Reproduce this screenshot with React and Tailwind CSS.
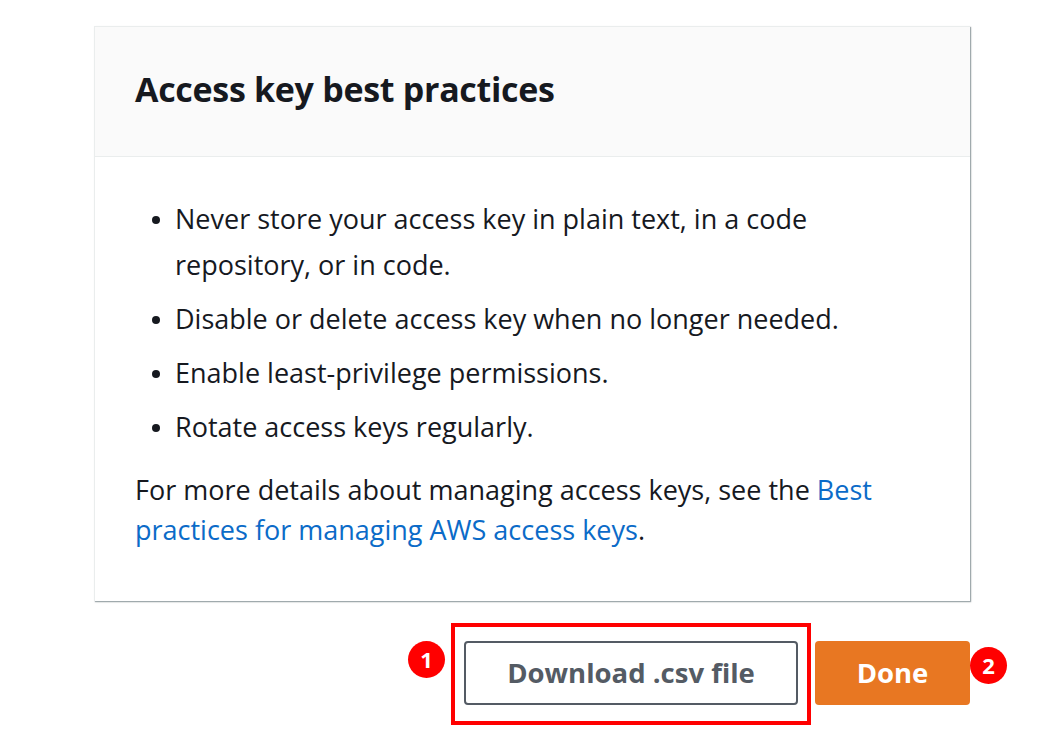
export default function App() {
  const tips = [
    "Never store your access key in plain text, in a code repository, or in code.",
    "Disable or delete access key when no longer needed.",
    "Enable least-privilege permissions.",
    "Rotate access keys regularly.",
  ];

  return (
    <div
      className="w-[1048px] h-[743px] bg-white text-[#16191f]"
      style={{ fontFamily: '"Open Sans", "Noto Sans", sans-serif' }}
    >
      <div className="pt-[26px] pl-[94px]">
        {/* Best practices card */}
        <div className="w-[876px] bg-white border-t border-l border-[#eaeded] shadow-[1px_1px_1px_0_rgba(0,28,36,0.3),1px_1px_2px_0_rgba(0,28,36,0.15)]">
          <div className="h-[130px] bg-[#fafafa] border-b border-[#eaeded] px-10 flex items-center">
            <h2 className="text-[34px] font-bold tracking-[-0.3px] -mt-[4px]">Access key best practices</h2>
          </div>
          <div className="px-10 pt-[39px] pb-[51px] text-[27px]">
            <ul className="pl-[40px] flex flex-col gap-[8px]">
              {tips.map((t) => (
                <li key={t} className="relative leading-[46px]">
                  <span className="absolute left-[-23px] top-[20px] w-[8px] h-[8px] rounded-full bg-[#16191f]" />
                  {t}
                </li>
              ))}
            </ul>
            <p className="mt-[20px] leading-[40px]">
              For more details about managing access keys, see the{" "}
              <a className="text-[#0b6bc8]">Best practices for managing AWS access keys</a>.
            </p>
          </div>
        </div>

        {/* Actions */}
        <div className="flex justify-end items-center w-[876px] mt-[22px]">
          <div className="relative border-[4px] border-[#ff0000] px-[9px] pt-[14px] pb-[16px]">
            <button className="w-[334px] h-[64px] rounded-[4px] border-2 border-[#545b64] text-[#545b64] text-[27.5px] font-bold bg-white">
              Download .csv file
            </button>
            <span className="absolute left-[-47px] top-[14px] w-[37px] h-[37px] rounded-full bg-[#ff0000] text-white text-[22px] font-bold flex items-center justify-center">
              1
            </span>
          </div>
          <div className="relative ml-[4px] mb-[2px]">
            <button className="w-[155px] h-[64px] rounded-[4px] bg-[#e87722] text-white text-[27.5px] font-bold">
              Done
            </button>
            <span className="absolute right-[-37px] top-[6px] w-[37px] h-[37px] rounded-full bg-[#ff0000] text-white text-[22px] font-bold flex items-center justify-center">
              2
            </span>
          </div>
        </div>
      </div>
    </div>
  );
}
